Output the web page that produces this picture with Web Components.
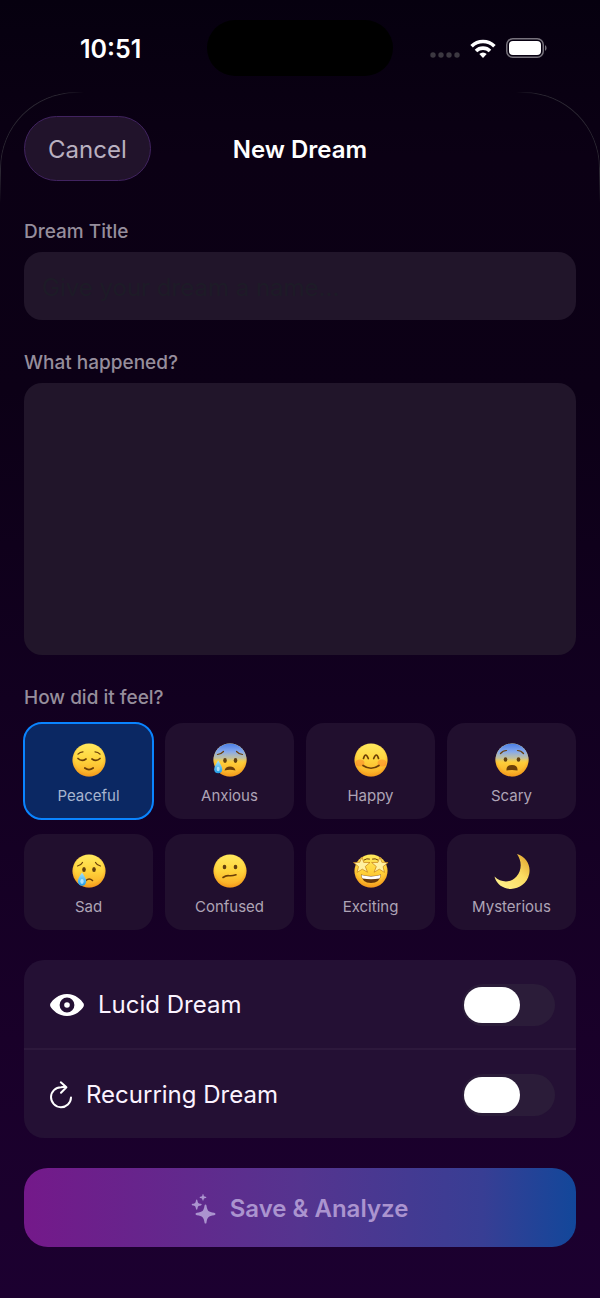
<!DOCTYPE html>
<html lang="en">
<head>
<meta charset="utf-8">
<meta name="viewport" content="width=device-width, initial-scale=1">
<title>New Dream</title>
<style>
  html {
    min-height: 100%;
    background: linear-gradient(#06000f, #0b0014 12%, #0c0016 30%, #120020 54%, #190029 80%, #1c0030);
  }
  body {
    margin: 0;
    font-family: Inter, "Liberation Sans", sans-serif;
    color: #fff;
  }
</style>
</head>
<body>
<status-bar>10:51</status-bar>
<dream-sheet>
  <sheet-header slot="header" action="Cancel">New Dream</sheet-header>
  <text-field label="Dream Title" placeholder="Give your dream a name..."></text-field>
  <text-field label="What happened?" multiline></text-field>
  <mood-picker label="How did it feel?"></mood-picker>
  <toggle-list>
    <toggle-row icon="eye">Lucid Dream</toggle-row>
    <toggle-row icon="recur">Recurring Dream</toggle-row>
  </toggle-list>
  <save-button>Save &amp; Analyze</save-button>
</dream-sheet>

<script>
const face = `
  <defs>
    <linearGradient id="skin" x1="0" y1="0" x2="0" y2="1">
      <stop offset="0" stop-color="#ffe95f"/>
      <stop offset=".5" stop-color="#ffd43c"/>
      <stop offset="1" stop-color="#f8a823"/>
    </linearGradient>
    <radialGradient id="rim" cx=".5" cy=".45" r=".56">
      <stop offset=".75" stop-color="#f08a12" stop-opacity="0"/>
      <stop offset="1" stop-color="#ee8510" stop-opacity=".5"/>
    </radialGradient>
    <linearGradient id="cold" x1="0" y1="0" x2="0" y2="1">
      <stop offset="0" stop-color="#4a7de6"/>
      <stop offset=".25" stop-color="#86a9ec"/>
      <stop offset=".45" stop-color="#a9b7c4" stop-opacity=".7"/>
      <stop offset=".6" stop-color="#fdcb35" stop-opacity="0"/>
    </linearGradient>
    <linearGradient id="drop" x1="0" y1="0" x2="0" y2="1">
      <stop offset="0" stop-color="#a5e3fb"/>
      <stop offset="1" stop-color="#1f9be6"/>
    </linearGradient>
  </defs>
  <circle cx="17" cy="17" r="16.5" fill="url(#skin)"/>
  <circle cx="17" cy="17" r="16.5" fill="url(#rim)"/>`;

const cold = `<circle cx="17" cy="17" r="16.5" fill="url(#cold)"/>`;

const line = (d, w = 1.3) =>
  `<path d="${d}" fill="none" stroke="#6b3f08" stroke-width="${w}" stroke-linecap="round" stroke-linejoin="round"/>`;

const eyes = (x1, x2, y, ry = 2.6) => `
  <ellipse cx="${x1}" cy="${y}" rx="1.8" ry="${ry}" fill="#62400f"/>
  <ellipse cx="${x2}" cy="${y}" rx="1.8" ry="${ry}" fill="#62400f"/>`;

// name: [viewBox, markup]
const ICONS = {
  peaceful: ["0 0 34 34", face +
    line("M6 11.2q2-2.4 5-2.4M28 11.2q-2-2.4-5-2.4", 1.2) +
    line("M6 15.5q3.6 3.4 8 .5M28 15.5q-3.6 3.4-8 .5", 1.7) +
    line("M12.800 25q4.200 3.200 8.400 0", 1.7)],
  anxious: ["0 0 34 34", face + cold +
    line("M4.500 11.500q3.600-.4 6-3M29.500 11.500q-3.600-.4-6-3", 1.2) +
    eyes(12, 22.500, 17.500, 2.4) +
    `<path d="M11.500 27.500q1-4 5.500-4t5.500 4q-5.500-1.500-11 0z" fill="#6b3f08"/>
    <path d="M5.200 17.500q4 6 4 8.700a4 4 0 0 1-8 0q0-2.700 4-8.700z" fill="url(#drop)"/>
    <ellipse cx="5.200" cy="26" rx="1.500" ry="2.200" fill="#d5f3ff" opacity=".7"/>`],
  happy: ["0 0 34 34", face +
    `<ellipse cx="6" cy="20" rx="4.500" ry="3.500" fill="#fa6c25" opacity=".4"/>
    <ellipse cx="28" cy="20" rx="4.500" ry="3.500" fill="#fa6c25" opacity=".4"/>` +
    line("M9.500 15.500q2-7 4.800 0M19.700 15.500q2.800-7 4.800 0", 1.7) +
    line("M9 22.500q8 5.500 16 0", 1.7)],
  scary: ["0 0 34 34", face + cold +
    line("M5.500 10.500q2.500-3 6-3M28.500 10.500q-2.500-3-6-3", 1.2) +
    eyes(10.500, 23.500, 16.500, 2.2) +
    `<path d="M11.500 27.500q-.5-5.500 5.500-5.500t5.500 5.500q-5.500-1.200-11 0z" fill="#6b3f08"/>`],
  sad: ["0 0 34 34", face +
    line("M5.500 12q3.500-.6 5-3.500M28.500 12q-3.500-.6-5-3.500", 1.2) +
    eyes(12, 22, 15.500) +
    line("M14 26.500q3.200-3 6.500 0", 1.6) +
    `<path d="M10 18.500q4.200 6 4.200 9a4.200 4.200 0 0 1-8.400 0q0-3 4.200-9z" fill="url(#drop)"/>
    <ellipse cx="10" cy="27.500" rx="1.700" ry="2.400" fill="#d5f3ff" opacity=".7"/>`],
  confused: ["0 0 34 34", face +
    eyes(11.500, 22.500, 13, 2.3) +
    line("M10 23.500q3-2.200 6-1.800t7-.9", 1.6)],
  exciting: ["0 0 34 34", face +
    line("M10 6q3-2 5.500-1M24 6q-3-2-5.500-1", 1) +
    `<path d="M7 20.500q10 3 20 0q-1 8.500-10 8.500t-10-8.500z" fill="#65370a"/>
    <path d="M7.500 21q9.500 2.800 19 0q0 2-1 3.400q-8.500 1.600-17 0q-1-1.400-1-3.400z" fill="#fff"/>
    <path d="M8 3l1.700 5.400 6.300.1-4.700 4 2.200 5.700-5.200-3-5.200 3.200 1.400-5.800-5-4.100 6.200-.2z" fill="#fff0a0" stroke="#c47e15" stroke-width=".7"/>
    <path d="M26 3l1.900 5.300 6.200.2-5 4.100 1.400 5.800-5.200-3.200-5.200 3 2.200-5.700-4.700-4 6.300-.1z" fill="#fff0a0" stroke="#c47e15" stroke-width=".7"/>`],
  mysterious: ["0 0 34 34", `
    <defs><linearGradient id="moon" x1=".2" y1="1" x2="1" y2=".2">
      <stop offset="0" stop-color="#fff08a"/><stop offset=".6" stop-color="#fbdc62"/><stop offset="1" stop-color="#e5ad35"/>
    </linearGradient></defs>
    <path d="M22 0C31 2.500 36 11 34.200 20C32 30.500 22 36.500 12 34.500C5.500 33 1 28.500-.5 22.500C6 29 16 29 21.500 22.500C27 16 27 7 22 0z" fill="url(#moon)"/>`],
  eye: ["0 0 34 22", `<path fill="#fff" fill-rule="evenodd" d="M17 0C25.500 0 31.500 6 33.600 9.600q.7 1.400 0 2.800C31.500 16 25.500 22 17 22S2.500 16 .4 12.400q-.7-1.400 0-2.800C2.500 6 8.500 0 17 0zM17 3.600a7.400 7.400 0 1 0 0 14.800 7.400 7.400 0 0 0 0-14.800z"/>
    <circle cx="17" cy="11" r="2.800" fill="#fff"/>`],
  recur: ["0 0 22 28", `<path fill="none" stroke="#fff" stroke-width="2" stroke-linecap="round" stroke-linejoin="round" d="M21 16.500A10 10 0 1 1 11 6.200q2.500-.2 5.200.1M10.800 1.300l5.600 5-5.400 5.400"/>`],
  sparkles: ["0 0 24 30", `<g fill="currentColor">
    <path d="M13.500 10.500q.8 0 1 1.200c.8 5 1.900 6.300 7.600 7.100q1.400.2 1.400 1.200t-1.400 1.200c-5.700.8-6.800 2.200-7.600 7.200q-.2 1.200-1 1.200t-1-1.200c-.8-5-1.900-6.400-7.600-7.200q-1.400-.2-1.400-1.200t1.400-1.200c5.700-.8 6.800-2.100 7.600-7.100q.2-1.200 1-1.200z"/>
    <path d="M4.700 5.500q.5 0 .7 1c.5 2.500.8 2.900 3.300 3.300q1 .2 1 .8t-1 .8c-2.500.4-2.800.8-3.300 3.300q-.2 1-.7 1t-.7-1c-.5-2.500-.8-2.900-3.300-3.300q-1-.2-1-.8t1-.8c2.500-.4 2.800-.8 3.300-3.300q.2-1 .7-1z"/>
    <path d="M11 0q.4 0 .5.700c.3 1.600.5 1.800 2.100 2.100q.7.100.7.600t-.7.600c-1.600.3-1.800.5-2.100 2.100q-.1.700-.5.700t-.5-.7c-.3-1.600-.5-1.800-2.100-2.100q-.7-.1-.7-.6t.7-.6c1.600-.3 1.800-.5 2.100-2.100q.1-.7.5-.7z"/></g>`],
  wifi: ["0 0 26 19", `<g fill="none" stroke="#fff" stroke-width="3.600"><path d="M1.600 7.200a16.200 16.200 0 0 1 22.800 0M6 12a10 10 0 0 1 14 0"/></g>
    <path d="M13 19l-3.700-3.900a5.300 5.300 0 0 1 7.400 0z" fill="#fff"/>`],
  battery: ["0 0 41 20", `<rect x=".75" y=".75" width="36.500" height="18.500" rx="6" fill="none" stroke="#77727c" stroke-width="1.500"/>
    <rect x="3" y="3" width="32" height="14" rx="4" fill="#fff"/>
    <path d="M39 7v6q1.600-1 1.600-3t-1.600-3z" fill="#77727c"/>`],
  dots: ["0 0 30 6", `<g fill="#3c3841"><circle cx="3" cy="3" r="2.700"/><circle cx="11" cy="3" r="2.700"/><circle cx="19" cy="3" r="2.700"/><circle cx="27" cy="3" r="2.700"/></g>`],
};

class DreamIcon extends HTMLElement {
  connectedCallback() {
    const [viewBox, markup] = ICONS[this.getAttribute("name")];
    const [, , width, height] = viewBox.split(" ");
    const shadow = this.attachShadow({ mode: "open" });
    shadow.innerHTML = `
      <style>
        :host { display: inline-flex; flex: none; }
        svg { display: block; overflow: visible; }
      </style>
      <svg viewBox="${viewBox}" width="${width}" height="${height}" aria-hidden="true">${markup}</svg>
    `;
  }
}

class StatusBar extends HTMLElement {
  connectedCallback() {
    const shadow = this.attachShadow({ mode: "open" });
    shadow.innerHTML = `
      <style>
        :host {
          display: grid;
          grid-template-columns: 1fr 186px 1fr;
          align-items: center;
          box-sizing: border-box;
          height: 92px;
          padding-top: 4px;
        }
        time {
          padding: 2px 0 0 80px;
          font-size: 25px;
          font-weight: 600;
          line-height: 30px;
        }
        .island { height: 56px; border-radius: 28px; background: #000; }
        .icons {
          display: flex;
          justify-content: flex-end;
          align-items: center;
          gap: 10px;
          padding-right: 53px;
        }
        .signal { padding-top: 14px; }
      </style>
      <time><slot></slot></time>
      <div class="island"></div>
      <div class="icons">
        <dream-icon class="signal" name="dots"></dream-icon>
        <dream-icon name="wifi"></dream-icon>
        <dream-icon name="battery"></dream-icon>
      </div>
    `;
  }
}

class DreamSheet extends HTMLElement {
  connectedCallback() {
    const shadow = this.attachShadow({ mode: "open" });
    shadow.innerHTML = `
      <style>
        :host { display: block; position: relative; padding: 24px 24px 51px; }
        /* hairline that only shows around the two top corners */
        .edge {
          position: absolute;
          inset: 0 0 auto;
          height: 110px;
          border: 1px solid #2b2632;
          border-bottom: 0;
          border-radius: 76px 76px 0 0;
          pointer-events: none;
          mask:
            linear-gradient(90deg, #000 60px, transparent 84px calc(100% - 84px), #000 calc(100% - 60px)),
            linear-gradient(#000 80px, transparent);
          mask-composite: intersect;
        }
        form { display: flex; flex-direction: column; gap: 30px; margin: 38px 0 0; }
      </style>
      <div class="edge"></div>
      <slot name="header"></slot>
      <form><slot></slot></form>
    `;
  }
}

class SheetHeader extends HTMLElement {
  connectedCallback() {
    const shadow = this.attachShadow({ mode: "open" });
    shadow.innerHTML = `
      <style>
        :host {
          display: grid;
          grid-template-columns: 1fr auto 1fr;
          align-items: center;
        }
        button {
          justify-self: start;
          height: 65px;
          padding: 2px 23px 0;
          border: 1px solid #412360;
          border-radius: 33px;
          background: #21132b;
          color: #b9b0c0;
          font: 400 24px/30px Inter, sans-serif;
        }
        h1 {
          margin: 0;
          padding-top: 2px;
          font-size: 24px;
          font-weight: 600;
          line-height: 30px;
        }
      </style>
      <button type="button">${this.getAttribute("action")}</button>
      <h1><slot></slot></h1>
    `;
  }
}

class TextField extends HTMLElement {
  connectedCallback() {
    const control = this.hasAttribute("multiline")
      ? `<textarea id="control"></textarea>`
      : `<input id="control" type="text" placeholder="${this.getAttribute("placeholder")}">`;
    const shadow = this.attachShadow({ mode: "open" });
    shadow.innerHTML = `
      <style>
        :host { display: flex; flex-direction: column; gap: 7px; }
        label { font-size: 19px; font-weight: 500; line-height: 26px; color: #968e9c; }
        input, textarea {
          box-sizing: border-box;
          width: 100%;
          margin: 0;
          padding: 2px 18px 0;
          border: 0;
          border-radius: 18px;
          background: #21152a;
          color: #fff;
          font: 400 24px/30px Inter, sans-serif;
        }
        input { height: 68px; }
        textarea { display: block; height: 272px; padding: 18px; resize: none; }
        ::placeholder { color: #1d1b27; opacity: 1; }
      </style>
      <label for="control">${this.getAttribute("label")}</label>
      ${control}
    `;
  }
}

class MoodPicker extends HTMLElement {
  moods = ["Peaceful", "Anxious", "Happy", "Scary", "Sad", "Confused", "Exciting", "Mysterious"];

  connectedCallback() {
    const shadow = this.attachShadow({ mode: "open" });
    shadow.innerHTML = `
      <style>
        :host { display: block; }
        fieldset { min-width: 0; margin: 0; padding: 0; border: 0; }
        legend {
          padding: 0;
          margin-bottom: 12px;
          font-size: 19px;
          font-weight: 500;
          line-height: 26px;
          color: #968e9c;
        }
        .grid { display: grid; grid-template-columns: repeat(4, 1fr); gap: 15px 12px; }
        label {
          display: flex;
          flex-direction: column;
          align-items: center;
          justify-content: center;
          gap: 9px;
          box-sizing: border-box;
          height: 96px;
          padding-top: 6px;
          border-radius: 18px;
          background: #210f2e;
          color: #aea4b6;
          font-size: 15px;
          line-height: 20px;
        }
        label:has(:checked) {
          background: #0b2863;
          color: #a7b5cf;
          outline: 2px solid #0a84ff;
          outline-offset: -1px;
        }
        input { appearance: none; position: absolute; margin: 0; }
      </style>
      <fieldset>
        <legend>${this.getAttribute("label")}</legend>
        <div class="grid">
          ${this.moods.map((mood, i) => `
            <label>
              <input type="radio" name="mood" value="${mood}" ${i === 0 ? "checked" : ""}>
              <dream-icon name="${mood.toLowerCase()}"></dream-icon>
              <span>${mood}</span>
            </label>
          `).join("")}
        </div>
      </fieldset>
    `;
  }
}

class ToggleList extends HTMLElement {
  connectedCallback() {
    const shadow = this.attachShadow({ mode: "open" });
    shadow.innerHTML = `
      <style>
        :host { display: block; border-radius: 20px; background: #241034; }
        ::slotted(:not(:first-child)) { border-top: 2px solid #2d193c; }
      </style>
      <slot></slot>
    `;
  }
}

class ToggleRow extends HTMLElement {
  connectedCallback() {
    const shadow = this.attachShadow({ mode: "open" });
    shadow.innerHTML = `
      <style>
        :host { display: block; }
        label {
          display: flex;
          align-items: center;
          gap: 14px;
          box-sizing: border-box;
          height: 88px;
          padding: 2px 21px 0 26px;
          font-size: 24px;
          line-height: 30px;
          color: #fbf3ff;
        }
        span { flex: 1; }
        input {
          appearance: none;
          display: flex;
          align-items: center;
          box-sizing: border-box;
          width: 93px;
          height: 42px;
          margin: 0;
          padding: 0 2px;
          border-radius: 21px;
          background: #2b1c39;
        }
        input::before {
          content: "";
          width: 56px;
          height: 36px;
          border-radius: 18px;
          background: #fff;
        }
        input:checked { justify-content: flex-end; background: #30d158; }
      </style>
      <label>
        <dream-icon name="${this.getAttribute("icon")}"></dream-icon>
        <span><slot></slot></span>
        <input type="checkbox" role="switch">
      </label>
    `;
  }
}

class SaveButton extends HTMLElement {
  connectedCallback() {
    const shadow = this.attachShadow({ mode: "open" });
    shadow.innerHTML = `
      <style>
        :host { display: block; }
        button {
          display: flex;
          align-items: center;
          justify-content: center;
          gap: 14px;
          width: 100%;
          height: 79px;
          padding: 2px 0 0;
          border: 0;
          border-radius: 24px;
          background: linear-gradient(90deg, #74198a, #55348f 50%, #383e94 83%, #12479a);
          color: #ab94cf;
          font: 600 24px/30px Inter, sans-serif;
        }
      </style>
      <button type="button">
        <dream-icon name="sparkles"></dream-icon>
        <slot></slot>
      </button>
    `;
  }
}

customElements.define("dream-icon", DreamIcon);
customElements.define("status-bar", StatusBar);
customElements.define("dream-sheet", DreamSheet);
customElements.define("sheet-header", SheetHeader);
customElements.define("text-field", TextField);
customElements.define("mood-picker", MoodPicker);
customElements.define("toggle-list", ToggleList);
customElements.define("toggle-row", ToggleRow);
customElements.define("save-button", SaveButton);
</script>
</body>
</html>
